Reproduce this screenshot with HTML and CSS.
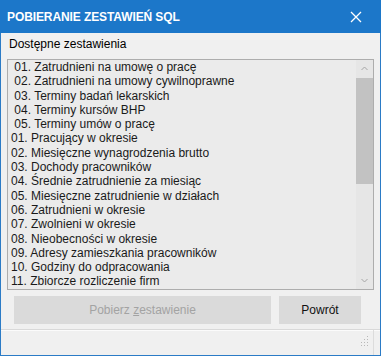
FILE: index.html
```html
<!DOCTYPE html>
<html lang="pl">
<head>
    <meta charset="utf-8">
    <title>Pobieranie zestawień SQL</title>
    <link rel="stylesheet" href="styles.css">
</head>
<body>
    <div class="window">
        <div class="titlebar">
            <span class="title">POBIERANIE ZESTAWIEŃ SQL</span>
            <svg class="close" width="12" height="12" viewBox="0 0 12 12">
                <path d="M1 1 L11 11 M11 1 L1 11" stroke="#fff" stroke-width="1.3" fill="none"/>
            </svg>
        </div>

        <div class="content">
            <div class="list-label">Dostępne zestawienia</div>

            <div class="listbox">
                <ul class="items">
                    <li>&nbsp;01. Zatrudnieni na umowę o pracę</li>
                    <li>&nbsp;02. Zatrudnieni na umowy cywilnoprawne</li>
                    <li>&nbsp;03. Terminy badań lekarskich</li>
                    <li>&nbsp;04. Terminy kursów BHP</li>
                    <li>&nbsp;05. Terminy umów o pracę</li>
                    <li>01. Pracujący w okresie</li>
                    <li>02. Miesięczne wynagrodzenia brutto</li>
                    <li>03. Dochody pracowników</li>
                    <li>04. Średnie zatrudnienie za miesiąc</li>
                    <li>05. Miesięczne zatrudnienie w działach</li>
                    <li>06. Zatrudnieni w okresie</li>
                    <li>07. Zwolnieni w okresie</li>
                    <li>08. Nieobecności w okresie</li>
                    <li>09. Adresy zamieszkania pracowników</li>
                    <li>10. Godziny do odpracowania</li>
                    <li>11. Zbiorcze rozliczenie firm</li>
                </ul>
                <div class="scrollbar">
                    <svg class="arrow" width="17" height="17" viewBox="0 0 17 17">
                        <path d="M5.5 10 L8.5 7 L11.5 10" stroke="#a6a6a6" stroke-width="1" fill="none"/>
                    </svg>
                    <div class="track">
                        <div class="thumb"></div>
                    </div>
                    <svg class="arrow" width="17" height="17" viewBox="0 0 17 17">
                        <path d="M5.5 7 L8.5 10 L11.5 7" stroke="#a6a6a6" stroke-width="1" fill="none"/>
                    </svg>
                </div>
            </div>

            <div class="buttons">
                <button class="btn btn-main" disabled>Pobierz <u>z</u>estawienie</button>
                <button class="btn btn-back">Powrót</button>
            </div>
        </div>

        <div class="statusbar">
            <div class="status-panel"></div>
            <svg class="grip" width="10" height="12" viewBox="0 0 10 12">
                <rect x="7" y="1" width="1" height="1" fill="#b8b8b8"/>
                <rect x="4" y="4" width="1" height="1" fill="#b8b8b8"/>
                <rect x="7" y="4" width="1" height="1" fill="#b8b8b8"/>
                <rect x="1" y="7" width="1" height="1" fill="#b8b8b8"/>
                <rect x="4" y="7" width="1" height="1" fill="#b8b8b8"/>
                <rect x="7" y="7" width="1" height="1" fill="#b8b8b8"/>
                <rect x="1" y="10" width="1" height="1" fill="#b8b8b8"/>
                <rect x="4" y="10" width="1" height="1" fill="#b8b8b8"/>
                <rect x="7" y="10" width="1" height="1" fill="#b8b8b8"/>
            </svg>
        </div>
    </div>
</body>
</html>
```

FILE: styles.css
```css
/* ページ全体 */
body {
    margin: 0;
    background-color: #f0f0f0;
    font-family: "Liberation Sans", Arial, sans-serif;
    font-size: 12px;
    color: #000;
}

/* ウィンドウ枠 */
.window {
    width: 381px;
    height: 356px;
    box-sizing: border-box;
    border: 1px solid #2b7bc6;
    border-top: none;
    display: flex;
    flex-direction: column;
    background-color: #f0f0f0;
}

/* タイトルバー */
.titlebar {
    height: 33px;
    margin: 0 -1px;
    padding: 0 19px 0 7px;
    background-color: #1c77c9;
    display: flex;
    align-items: center;
    justify-content: space-between;
    flex-shrink: 0;
}

.title {
    color: #fff;
    font-weight: bold;
    font-size: 12px;
    letter-spacing: -0.1px;
}

.close {
    display: block;
}

.content {
    padding: 3px 6px 0 6px;
}

.list-label {
    line-height: 15px;
    padding-left: 2px;
    margin-top: 1px;
    margin-bottom: 7px;
}

/* リスト */
.listbox {
    height: 229px;
    border: 1px solid #adadad;
    background-color: #ebebeb;
    display: flex;
}

.items {
    flex: 1;
    list-style: none;
    margin: 0;
    padding: 0 0 0 3px;
    line-height: 14.3px;
    white-space: nowrap;
    overflow: hidden;
    color: #1a1a1a;
}

/* スクロールバー */
.scrollbar {
    width: 17px;
    margin-left: 1px;
    background-color: #e6e6e6;
    display: flex;
    flex-direction: column;
}

.arrow {
    display: block;
    flex-shrink: 0;
}

.track {
    flex: 1;
}

.thumb {
    height: 106px;
    margin: 1px 0 0 0;
    background-color: #c2c2c2;
}

/* ボタン */
.buttons {
    display: flex;
    gap: 8px;
    padding: 6px 13px 0 7px;
}

.btn {
    height: 28px;
    border: none;
    background-color: #dadada;
    font-family: "Liberation Sans", Arial, sans-serif;
    font-size: 12px;
    padding: 0;
}

.btn-main {
    flex: 1;
    color: #a3a3a3;
}

.btn-back {
    width: 82px;
    color: #111;
}

/* ステータスバー */
.statusbar {
    margin-top: 5px;
    border-top: 1px solid #d9d9d9;
    box-shadow: inset 0 1px 0 #fbfbfb;
    flex: 1;
    display: flex;
    align-items: flex-end;
    position: relative;
}

.status-panel {
    flex: 1;
    align-self: stretch;
    border-right: 1px solid #dcdcdc;
    margin-right: 6px;
}

.grip {
    position: absolute;
    right: 10px;
    bottom: 8px;
}
```
